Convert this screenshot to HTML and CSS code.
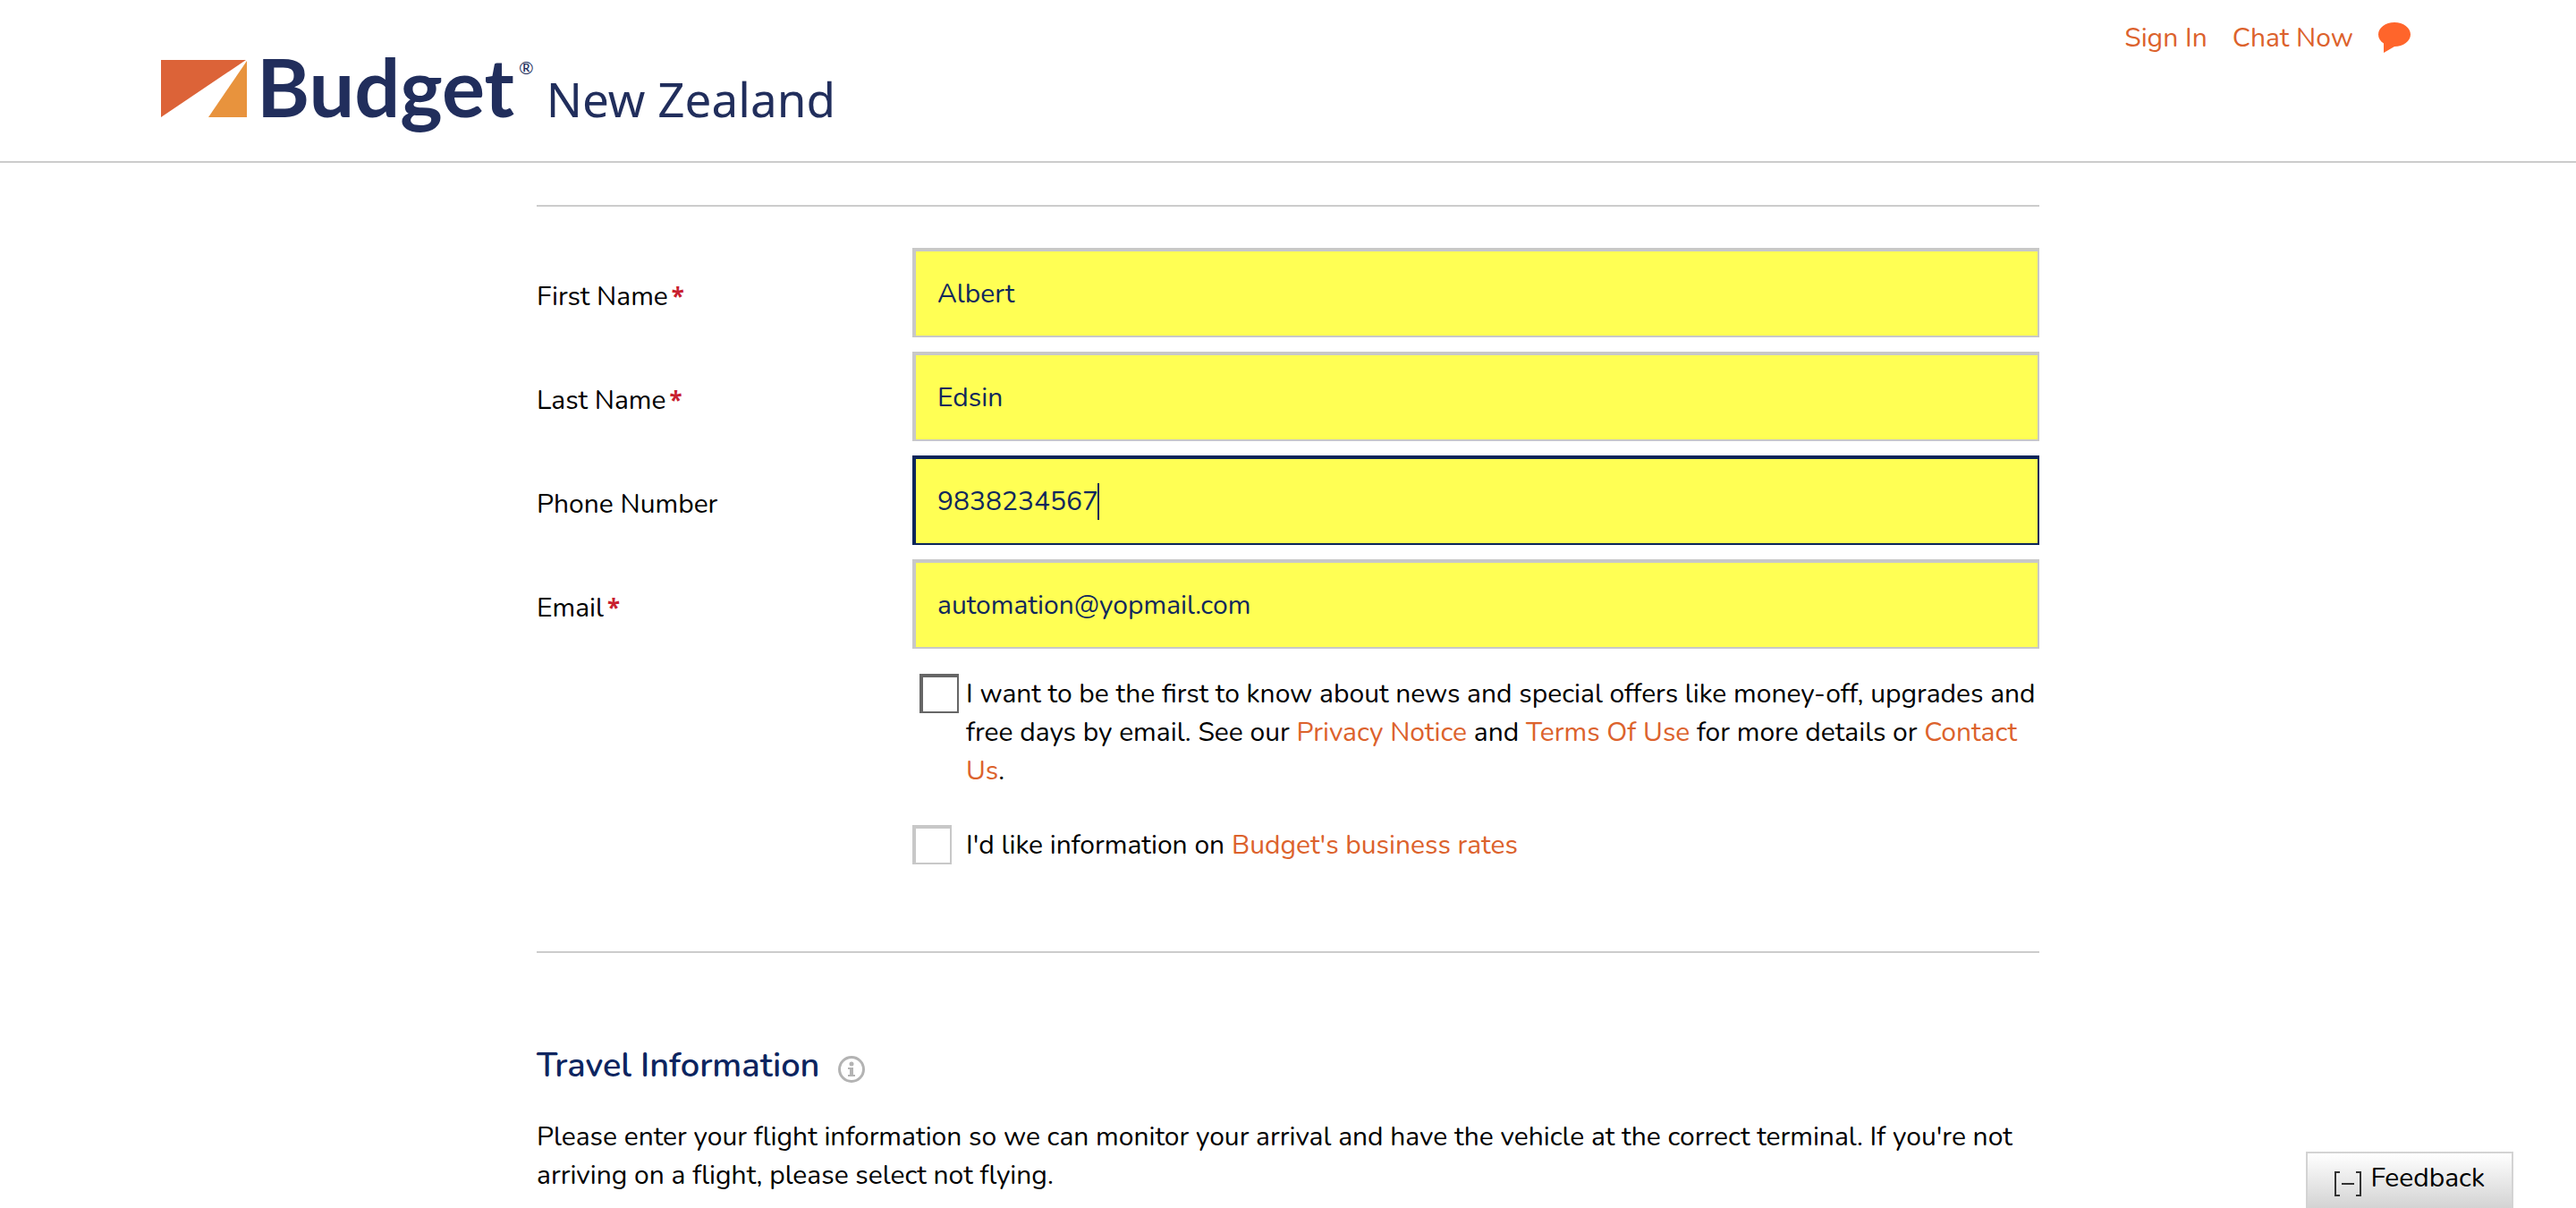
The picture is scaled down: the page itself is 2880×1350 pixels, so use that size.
FILE: index.html
```html
<!DOCTYPE html>
<html lang="en">
<head>
<meta charset="utf-8">
<meta name="viewport" content="width=device-width, initial-scale=1">
<title>Budget New Zealand</title>
<link rel="stylesheet" href="styles.css">
</head>
<body>
<header class="site-header">
  <div class="header-inner">
    <a class="logo" href="#">
      <svg class="logo-mark" viewBox="0 0 96 64" aria-hidden="true">
        <path d="M0 0H95L0 64Z" fill="#dc6338"/>
        <path d="M96 1V64H53Z" fill="#e8933d"/>
      </svg>
      <span class="logo-name">Budget</span>
      <span class="logo-reg">®</span>
      <span class="logo-country">New Zealand</span>
    </a>
    <nav class="header-links">
      <a href="#">Sign In</a>
      <a href="#">Chat Now</a>
      <a class="chat-link" href="#" aria-label="Open chat">
        <svg class="chat-icon" viewBox="0 0 36 34" aria-hidden="true">
          <path d="M18 0C28 0 36 6 36 13.500S28 27 18 27L6 34V23.500C2 21 0 17.500 0 13.500C0 6 8 0 18 0Z" fill="#ff652b"/>
        </svg>
      </a>
    </nav>
  </div>
</header>

<main class="page">
  <form class="details">
    <div class="row">
      <label for="first">First Name<span class="required">*</span></label>
      <div class="field"><input class="text-input" id="first" type="text" value="Albert"></div>
    </div>
    <div class="row">
      <label for="last">Last Name<span class="required">*</span></label>
      <div class="field"><input class="text-input" id="last" type="text" value="Edsin"></div>
    </div>
    <div class="row">
      <label for="phone">Phone Number</label>
      <div class="field"><input class="text-input is-active" id="phone" type="tel" value="9838234567"><span class="caret"></span></div>
    </div>
    <div class="row">
      <label for="email">Email<span class="required">*</span></label>
      <div class="field"><input class="text-input" id="email" type="email" value="automation@yopmail.com"></div>
    </div>
    <div class="options">
      <div class="option">
        <input class="tick tick-dark" id="offers" type="checkbox">
        <label for="offers">I want to be the first to know about news and special offers like money-off, upgrades and free days by email. See our <a href="#">Privacy Notice</a> and <a href="#">Terms Of Use</a> for more details or <a href="#">Contact Us</a>.</label>
      </div>
      <div class="option">
        <input class="tick" id="business" type="checkbox">
        <label for="business">I'd like information on <a href="#">Budget's business rates</a></label>
      </div>
    </div>
  </form>

  <section class="travel">
    <div class="travel-head">
      <h2>Travel Information</h2>
      <svg class="info-icon" viewBox="0 0 30 30" role="img" aria-label="More information">
        <circle cx="15" cy="15" r="13.500" fill="none" stroke="#b3b3b3" stroke-width="3"/>
        <circle cx="15" cy="9" r="2.500" fill="#b3b3b3"/>
        <path d="M11 13H17V21H19V23H11V21H13V15H11Z" fill="#b3b3b3"/>
      </svg>
    </div>
    <p>Please enter your flight information so we can monitor your arrival and have the vehicle at the correct terminal. If you're not arriving on a flight, please select not flying.</p>
  </section>
</main>

<button class="feedback" type="button">
  <svg class="feedback-icon" viewBox="0 0 30 28" aria-hidden="true">
    <path d="M6 1H1V27H6M24 1H29V27H24M8 14H22" fill="none" stroke="#333" stroke-width="2"/>
  </svg>
  Feedback
</button>
</body>
</html>
```
FILE: styles.css
```css
* { box-sizing: border-box; }

body {
  margin: 0;
  background: #fff;
  color: #000;
  font: 30px/43px Nunito, Lato, "Noto Sans", sans-serif;
}

a { color: #dc622c; text-decoration: none; }

/* Header */
.site-header { border-bottom: 2px solid #ccc; }

.header-inner {
  display: flex;
  justify-content: space-between;
  align-items: flex-start;
  max-width: 2520px;
  min-height: 180px;
  margin: 0 auto;
}

.logo {
  display: flex;
  align-items: baseline;
  padding-top: 52px;
  color: #212e5c;
}
.logo-mark { width: 96px; height: 64px; margin-right: 11px; }
.logo-name { font: 700 90px/88px Lato, sans-serif; }
.logo-reg {
  align-self: flex-start;
  margin: 13px 14px 0 5px;
  font: 20px/20px Lato, sans-serif;
}
.logo-country { font: 53px/60px "Noto Sans", sans-serif; }

.header-links {
  display: flex;
  gap: 28px;
  padding: 21px 5px 0 0;
}
.chat-link { display: flex; align-items: flex-start; padding-top: 4px; }
.chat-icon { width: 36px; height: 34px; }

/* Driver details */
.page {
  max-width: 1680px;
  margin: 0 auto;
  padding-top: 47px;
}

.details {
  display: flex;
  flex-direction: column;
  gap: 16px;
  padding: 46px 0 97px;
  border-top: 2px solid #ccc;
  border-bottom: 2px solid #ccc;
}

.row {
  display: grid;
  grid-template-columns: 1fr 3fr;
  align-items: center;
}
.row label { padding-top: 8px; }
.required {
  margin-left: 4px;
  color: #c8202f;
  font: 700 26px/26px "Noto Sans", sans-serif;
}

.field { position: relative; }
.text-input {
  display: block;
  width: 100%;
  height: 100px;
  padding: 0 24px;
  border: solid #c8c8c8;
  border-width: 4px 2px 2px 4px;
  border-radius: 0;
  background: #ffff54;
  color: #10285c;
  font: inherit;
  outline: none;
}
.text-input.is-active { border-color: #0b2559; }

.caret {
  position: absolute;
  top: 31px;
  left: 207px;
  width: 2px;
  height: 41px;
  background: #0b2559;
}

.options {
  display: flex;
  flex-direction: column;
  gap: 39px;
  margin-left: 25%;
  padding-top: 12px;
}
.option { display: flex; align-items: flex-start; }
.option label { padding-top: 1px; }
.tick {
  appearance: none;
  flex: none;
  width: 44px;
  height: 44px;
  margin: 0 16px 0 0;
  border: solid #c8c8c8;
  border-width: 4px 2px 2px 4px;
  background: #fff;
}
.tick-dark { margin: 0 8px; border-color: #666; }

/* Travel information */
.travel { padding-top: 102px; }
.travel-head { display: flex; align-items: center; gap: 20px; }
.travel h2 {
  margin: 0;
  color: #0c2560;
  font-size: 38px;
  line-height: 48px;
  font-weight: 600;
}
.info-icon { width: 30px; height: 30px; margin-top: 8px; }
.travel p { margin: 34px 0 0; }

/* Feedback tab */
.feedback {
  position: fixed;
  right: 70px;
  bottom: 0;
  display: flex;
  align-items: center;
  gap: 10px;
  height: 63px;
  padding: 0 30px 7px;
  border: 2px solid #d3d3d3;
  border-bottom: 0;
  background: linear-gradient(#fff, #d3d3d3);
  color: #000;
  font: inherit;
}
.feedback-icon { width: 30px; height: 28px; margin-top: 14px; }
```
